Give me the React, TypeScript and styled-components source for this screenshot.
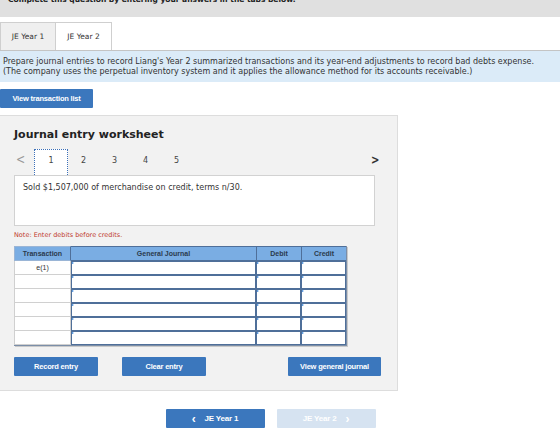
import React from "react";
import styled, { createGlobalStyle } from "styled-components";

const GlobalStyle = createGlobalStyle`
  body {
    margin: 0;
    background: #ffffff;
    font-family: "DejaVu Sans", Verdana, sans-serif;
    color: #333333;
  }
`;

const rows = ["e(1)", "", "", "", "", ""];
const pages = [1, 2, 3, 4, 5];

export default function App() {
  return (
    <Page>
      <GlobalStyle />
      <TopBar>
        <TopText>Complete this question by entering your answers in the tabs below.</TopText>
      </TopBar>
      <Tabs>
        <Tab>JE Year 1</Tab>
        <Tab $active>JE Year 2</Tab>
      </Tabs>
      <Instructions>
        Prepare journal entries to record Liang's Year 2 summarized transactions and its year-end adjustments to record bad debts expense.
        <br />
        (The company uses the perpetual inventory system and it applies the allowance method for its accounts receivable.)
      </Instructions>
      <ListButton>View transaction list</ListButton>
      <Worksheet>
        <Title>Journal entry worksheet</Title>
        <Pager>
          <Arrow>&lt;</Arrow>
          {pages.map((p) => (
            <PageNum key={p} $current={p === 1}>
              {p}
            </PageNum>
          ))}
          <Arrow $next>&gt;</Arrow>
        </Pager>
        <Description>Sold $1,507,000 of merchandise on credit, terms n/30.</Description>
        <Note>Note: Enter debits before credits.</Note>
        <Grid>
          <HeadCell>Transaction</HeadCell>
          <HeadCell>General Journal</HeadCell>
          <HeadCell>Debit</HeadCell>
          <HeadCell>Credit</HeadCell>
          {rows.map((r, i) => (
            <React.Fragment key={i}>
              <TxCell>{r}</TxCell>
              <InputCell />
              <InputCell />
              <InputCell />
            </React.Fragment>
          ))}
        </Grid>
        <Actions>
          <ActionButton>Record entry</ActionButton>
          <ActionButton>Clear entry</ActionButton>
          <ActionButton $wide>View general journal</ActionButton>
        </Actions>
      </Worksheet>
      <Nav>
        <NavButton>
          <span>&lsaquo;</span> JE Year 1
        </NavButton>
        <NavButton $disabled>
          JE Year 2 <span>&rsaquo;</span>
        </NavButton>
      </Nav>
    </Page>
  );
}

const Page = styled.div`
  width: 560px;
  height: 434px;
  overflow: hidden;
`;

const TopBar = styled.div`
  height: 17px;
  background: #e0e0e0;
  overflow: hidden;
`;

const TopText = styled.div`
  margin-top: -5px;
  padding-left: 8px;
  font-size: 7.5px;
  font-weight: bold;
  line-height: 10px;
  color: #222;
`;

const Tabs = styled.div`
  display: flex;
  margin-top: 5px;
  height: 28px;
`;

const Tab = styled.div<{ $active?: boolean }>`
  width: 56px;
  box-sizing: border-box;
  display: flex;
  align-items: center;
  justify-content: center;
  font-size: 7.5px;
  color: #333;
  background: ${(p) => (p.$active ? "#ffffff" : "#efefef")};
  border: 1px solid #cfcfcf;
  border-bottom: none;
  border-left: ${(p) => (p.$active ? "none" : "1px solid #cfcfcf")};
`;

const Instructions = styled.div`
  height: 32px;
  box-sizing: border-box;
  border-top: 1px solid #c4c4c4;
  background: #dbebf8;
  padding: 6px 3px 0;
  font-size: 8px;
  line-height: 10px;
  color: #333;
`;

const ButtonBase = styled.div`
  box-sizing: border-box;
  display: flex;
  align-items: center;
  justify-content: center;
  height: 19px;
  background: #3b77bd;
  border-radius: 1px;
  color: #ffffff;
  font-family: "Liberation Sans", Arial, sans-serif;
  font-weight: bold;
  font-size: 7.5px;
  letter-spacing: -0.2px;
`;

const ListButton = styled(ButtonBase)`
  width: 93px;
  margin-top: 7px;
`;

const Worksheet = styled.div`
  width: 398px;
  box-sizing: border-box;
  margin-top: 7px;
  background: #f2f2f2;
  border: 1px solid #dddddd;
  border-left: none;
  padding: 12px 0 14px 14px;
`;

const Title = styled.div`
  font-size: 11px;
  font-weight: bold;
  color: #222;
  line-height: 14px;
  margin-bottom: 7px;
`;

const Pager = styled.div`
  display: flex;
  align-items: center;
  height: 26px;
  width: 367px;
  font-size: 8px;
  color: #444;
`;

const Arrow = styled.div<{ $next?: boolean }>`
  width: ${(p) => (p.$next ? "10px" : "20px")};
  padding-left: ${(p) => (p.$next ? "0" : "2px")};
  padding-bottom: 3px;
  box-sizing: border-box;
  text-align: left;
  font-size: ${(p) => (p.$next ? "10px" : "11px")};
  font-weight: ${(p) => (p.$next ? "bold" : "normal")};
  color: ${(p) => (p.$next ? "#333" : "#999")};
  margin-left: ${(p) => (p.$next ? "auto" : "0")};
  transform: scaleY(1.2);
`;

const PageNum = styled.div<{ $current?: boolean }>`
  width: ${(p) => (p.$current ? "34px" : "31px")};
  height: 26px;
  box-sizing: border-box;
  display: flex;
  align-items: center;
  justify-content: center;
  padding-bottom: 4px;
  background: ${(p) => (p.$current ? "#ffffff" : "transparent")};
  border: ${(p) => (p.$current ? "1px dotted #3b6fb8" : "1px solid transparent")};
  border-bottom: none;
  position: relative;
  z-index: 1;
`;

const Description = styled.div`
  width: 361px;
  height: 51px;
  box-sizing: border-box;
  background: #ffffff;
  border: 1px solid #d2d2d2;
  padding: 7px 8px;
  font-size: 8px;
  color: #333;
`;

const Note = styled.div`
  margin-top: 5px;
  font-size: 6.5px;
  color: #c0392b;
  line-height: 8px;
`;

const Grid = styled.div`
  margin-top: 7px;
  display: grid;
  grid-template-columns: 57px 185px 45px 45px;
  grid-auto-rows: 14px;
  grid-template-rows: 15px;
  width: 332px;
  background: #ffffff;
  border-right: 1px solid #7b8ea8;
  border-bottom: 1px solid #7b8ea8;
  box-shadow: 1px 1px 0 #c9c9c9;
`;

const HeadCell = styled.div`
  background: #7aade3;
  border: 1px solid #4f6f99;
  border-right: none;
  display: flex;
  align-items: center;
  justify-content: center;
  font-family: "Liberation Sans", Arial, sans-serif;
  font-weight: bold;
  font-size: 7px;
  color: #2b3a4d;
  &:first-child {
    border-color: #9ab5d6;
    border-right: 1px solid #4f6f99;
  }
  &:nth-child(2) {
    border-left: none;
  }
`;

const TxCell = styled.div`
  border: 1px solid #d0d0d0;
  border-top: none;
  display: flex;
  align-items: center;
  justify-content: center;
  font-family: "Liberation Sans", Arial, sans-serif;
  font-size: 7px;
  color: #333;
`;

const InputCell = styled.div`
  position: relative;
  box-sizing: border-box;
  background: #ffffff;
  border: 1px solid #4f6f99;
  &::before {
    content: "";
    position: absolute;
    left: 0;
    top: 0;
    border-top: 1.5px solid transparent;
    border-bottom: 1.5px solid transparent;
    border-left: 2px solid #2f7fd6;
  }
`;

const Actions = styled.div`
  display: flex;
  gap: 24px;
  width: 367px;
  margin-top: 11px;
`;

const ActionButton = styled(ButtonBase)<{ $wide?: boolean }>`
  width: ${(p) => (p.$wide ? "93px" : "84px")};
  margin-left: ${(p) => (p.$wide ? "auto" : "0")};
`;

const Nav = styled.div`
  display: flex;
  justify-content: center;
  gap: 12px;
  width: 541px;
  margin-top: 18px;
`;

const NavButton = styled(ButtonBase)<{ $disabled?: boolean }>`
  width: 99px;
  gap: 9px;
  font-size: 8px;
  background: ${(p) => (p.$disabled ? "#d6e3f1" : "#3b77bd")};
  span {
    font-size: 12px;
    font-weight: bold;
  }
`;
